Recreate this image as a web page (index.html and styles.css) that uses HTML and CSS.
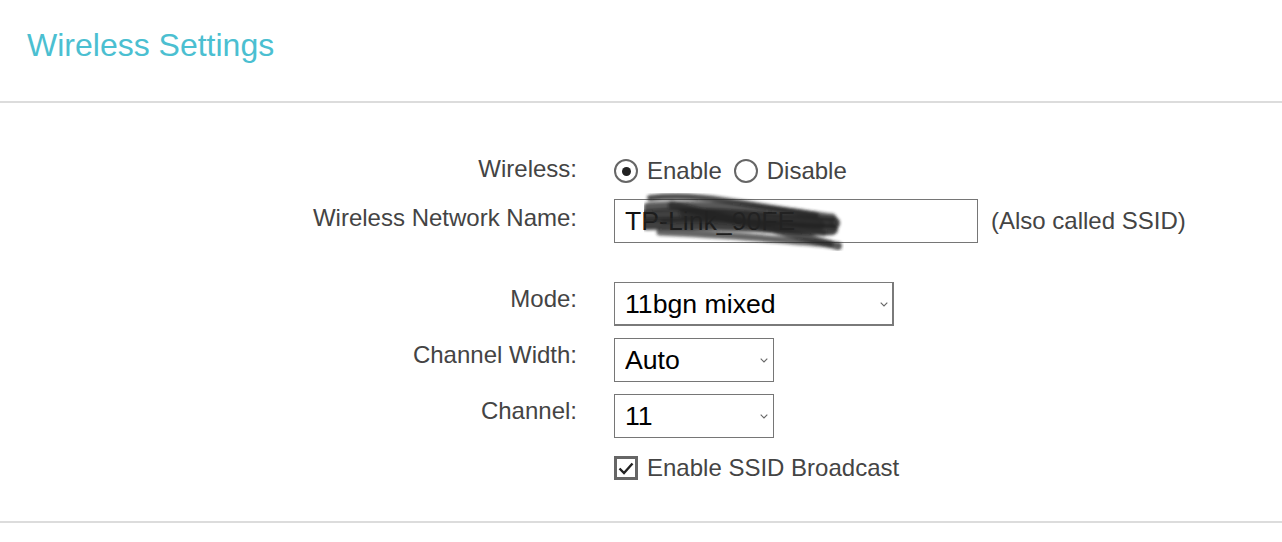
FILE: index.html
```html
<!DOCTYPE html>
<html lang="en">
<head>
<meta charset="utf-8">
<title>Wireless Settings</title>
<link rel="stylesheet" href="styles.css">
</head>
<body>
<div class="page">
  <header class="title-bar">
    <h1 class="title">Wireless Settings</h1>
  </header>
  <form class="settings">
    <div class="row row-wireless">
      <label class="label">Wireless:</label>
      <div class="control radios">
        <label class="radio-item"><input type="radio" name="wl" class="radio" checked><span>Enable</span></label>
        <label class="radio-item"><input type="radio" name="wl" class="radio"><span>Disable</span></label>
      </div>
    </div>
    <div class="row row-name">
      <label class="label">Wireless Network Name:</label>
      <div class="control">
        <div class="ssid-wrap">
          <input type="text" class="text-input" value="TP-Link_90FE">
          <svg class="scribble" width="200" height="60" viewBox="0 0 200 60" aria-hidden="true">
            <defs><filter id="blur"><feGaussianBlur stdDeviation="1.6"/></filter></defs>
            <g fill="none" stroke="#222" stroke-linecap="round" filter="url(#blur)">
              <path d="M6 5 C40 1 75 6 110 12 C140 17 160 20 172 22" stroke-width="6" opacity="0.8"/>
              <path d="M4 14 C50 11 100 14 150 20 C165 22 178 24 188 25" stroke-width="9" opacity="0.75"/>
              <path d="M0 23 C40 19 80 21 120 25 C150 28 172 29 190 30" stroke-width="12" opacity="0.85"/>
              <path d="M2 31 C50 30 90 32 130 34 C160 36 178 37 188 36" stroke-width="12" opacity="0.85"/>
              <path d="M28 12 C70 22 120 34 160 44 C175 48 185 51 194 53" stroke-width="8" opacity="0.75"/>
              <path d="M16 39 C60 41 100 43 140 47 C160 49 175 50 186 51" stroke-width="7" opacity="0.7"/>
              <path d="M40 20 C90 22 130 26 176 32" stroke-width="10" opacity="0.65"/>
              <path d="M20 28 C60 26 110 28 180 40" stroke-width="6" opacity="0.6"/>
            </g>
          </svg>
        </div>
        <span class="hint">(Also called SSID)</span>
      </div>
    </div>
    <div class="row row-mode">
      <label class="label">Mode:</label>
      <div class="control">
        <div class="select-wrap select-wide">
          <select class="select"><option>11bgn mixed</option></select>
          <svg class="chevron" width="8" height="5" viewBox="0 0 8 5" aria-hidden="true"><polyline points="0.7,0.7 4,4 7.3,0.7" fill="none" stroke="#666" stroke-width="1.1"/></svg>
        </div>
      </div>
    </div>
    <div class="row row-select">
      <label class="label">Channel Width:</label>
      <div class="control">
        <div class="select-wrap select-narrow">
          <select class="select"><option>Auto</option></select>
          <svg class="chevron" width="8" height="5" viewBox="0 0 8 5" aria-hidden="true"><polyline points="0.7,0.7 4,4 7.3,0.7" fill="none" stroke="#666" stroke-width="1.1"/></svg>
        </div>
      </div>
    </div>
    <div class="row row-select">
      <label class="label">Channel:</label>
      <div class="control">
        <div class="select-wrap select-narrow">
          <select class="select"><option>11</option></select>
          <svg class="chevron" width="8" height="5" viewBox="0 0 8 5" aria-hidden="true"><polyline points="0.7,0.7 4,4 7.3,0.7" fill="none" stroke="#666" stroke-width="1.1"/></svg>
        </div>
      </div>
    </div>
    <div class="row row-check">
      <span class="label"></span>
      <div class="control">
        <label class="check-item">
          <span class="checkbox">
            <svg width="16" height="13" viewBox="0 0 16 13" aria-hidden="true"><polyline points="1.5,6.5 6,11 14.5,1.5" fill="none" stroke="#222" stroke-width="2.4"/></svg>
          </span>
          <span>Enable SSID Broadcast</span>
        </label>
      </div>
    </div>
  </form>
</div>
</body>
</html>
```
FILE: styles.css
```css
* { box-sizing: border-box; }

html, body {
  margin: 0;
  padding: 0;
  background: #ffffff;
}

body {
  font-family: "Liberation Sans", Arial, sans-serif;
  color: #444444;
}

.page {
  width: 1282px;
}

.title-bar {
  height: 103px;
  padding: 27px 0 0 27px;
  border-bottom: 2px solid #dcdcdc;
}

.title {
  margin: 0;
  font-size: 32px;
  line-height: 37px;
  font-weight: normal;
  color: #4bbfd1;
}

.settings {
  display: flex;
  flex-direction: column;
  padding: 50px 0 37px;
  border-bottom: 2px solid #dcdcdc;
}

.row {
  display: grid;
  grid-template-columns: 577px 1fr;
  column-gap: 37px;
  align-items: center;
}

.label {
  font-size: 24px;
  line-height: 28px;
  text-align: right;
  color: #444444;
}

.row-wireless { height: 36px; }
.row-wireless .label { padding-bottom: 5px; }

.row-name { height: 44px; margin-top: 10px; }
.row-name .label { padding-bottom: 7px; }

.row-mode { height: 44px; margin-top: 39px; }
.row-select { height: 44px; margin-top: 12px; }
.row-mode .label,
.row-select .label { padding-bottom: 10px; }

.row-check { height: 32px; margin-top: 14px; }

.control {
  display: flex;
  align-items: center;
  font-size: 24px;
  color: #444444;
}

.radios {
  gap: 12px;
}

.radio-item {
  display: flex;
  align-items: center;
  gap: 9px;
  line-height: 28px;
}

.radio {
  appearance: none;
  -webkit-appearance: none;
  margin: 0;
  width: 24px;
  height: 24px;
  border: 2.5px solid #666666;
  border-radius: 50%;
  display: grid;
  place-items: center;
  background: #fff;
}

.radio:checked::before {
  content: "";
  width: 9px;
  height: 9px;
  border-radius: 50%;
  background: #222222;
}

.ssid-wrap {
  position: relative;
  width: 364px;
  height: 44px;
}

.text-input {
  width: 364px;
  height: 44px;
  margin: 0;
  padding: 0 10px;
  border: 1px solid #767676;
  border-radius: 0;
  font-family: "Liberation Sans", Arial, sans-serif;
  font-size: 26.67px;
  color: #111111;
  background: #fff;
  outline: none;
}

.scribble {
  position: absolute;
  left: 30px;
  top: -6px;
  pointer-events: none;
}

.hint {
  margin-left: 13px;
  line-height: 28px;
}

.select-wrap {
  position: relative;
  height: 44px;
}

.select-wide { width: 280px; }
.select-narrow { width: 160px; }

.select {
  appearance: none;
  -webkit-appearance: none;
  width: 100%;
  height: 44px;
  margin: 0;
  padding: 0 24px 0 10px;
  border: 1px solid #767676;
  border-radius: 0;
  background: #fff;
  font-family: "Liberation Sans", Arial, sans-serif;
  font-size: 26.67px;
  color: #000000;
  outline: none;
}

.select-wide .select {
  border-right-width: 2px;
  border-bottom-width: 2px;
  border-color: #7a7a7a;
}

.chevron {
  position: absolute;
  right: 6px;
  top: 20px;
  pointer-events: none;
}

.check-item {
  display: flex;
  align-items: center;
  gap: 9px;
  line-height: 28px;
}

.checkbox {
  width: 24px;
  height: 24px;
  border: 3px solid #666666;
  display: grid;
  place-items: center;
  background: #fff;
}
```
